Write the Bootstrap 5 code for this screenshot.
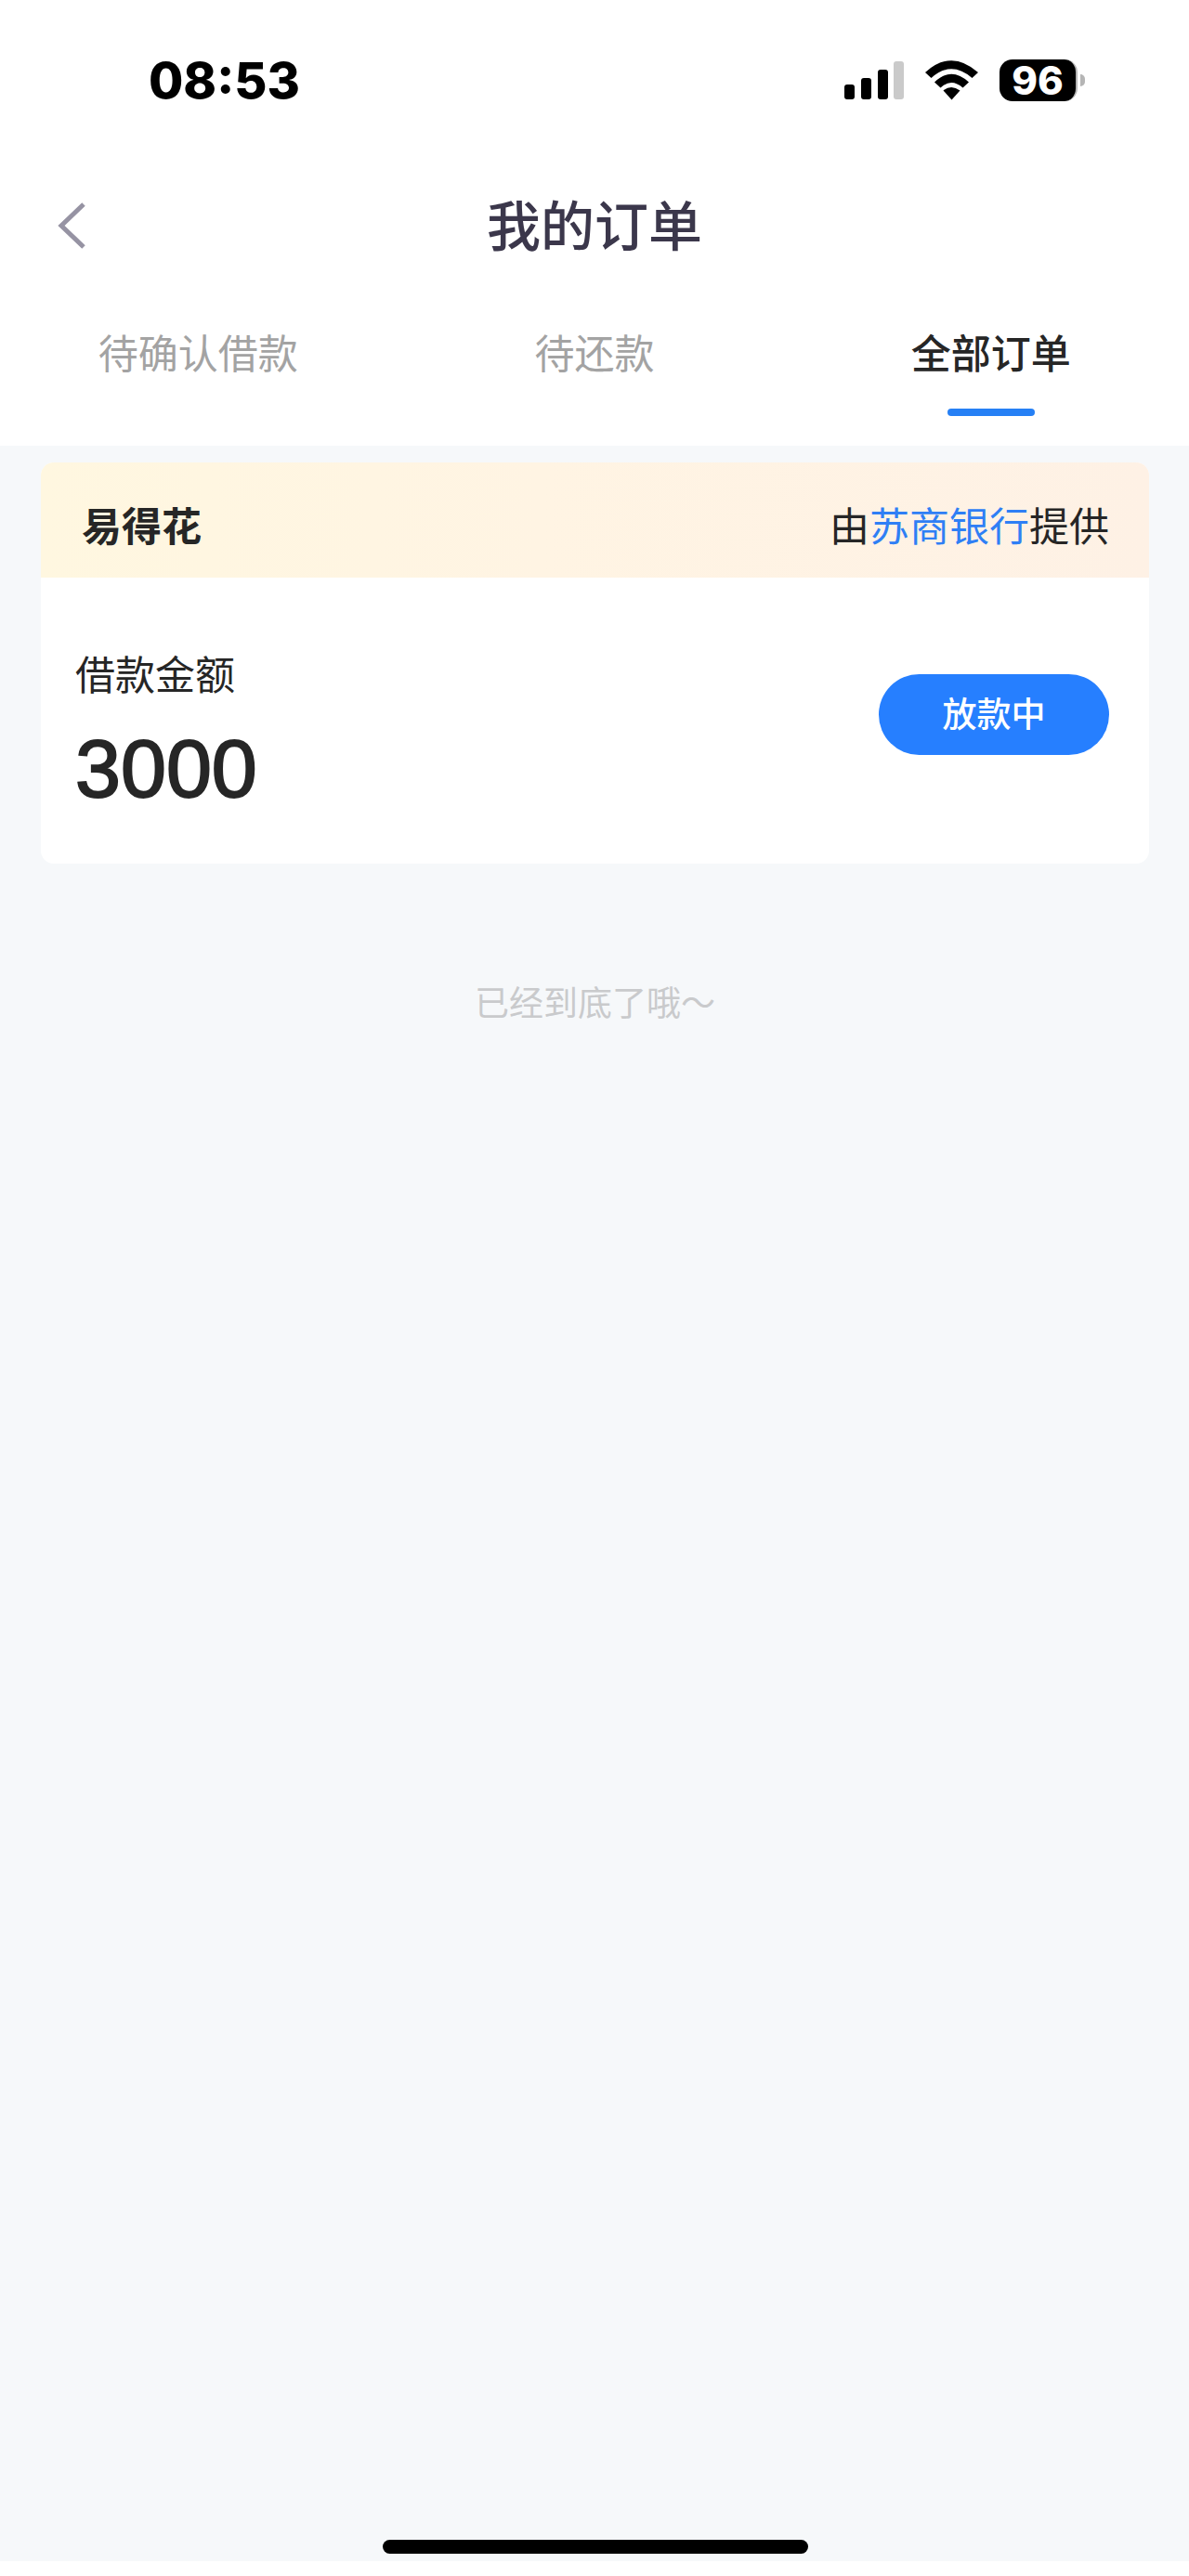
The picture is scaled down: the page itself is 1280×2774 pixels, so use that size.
<!DOCTYPE html>
<html lang="zh-CN">
<head>
<meta charset="utf-8">
<meta name="viewport" content="width=device-width, initial-scale=1">
<title>我的订单</title>
<link href="https://cdn.jsdelivr.net/npm/bootstrap@5.3.0/dist/css/bootstrap.min.css" rel="stylesheet">
<style>
  body { font-family: "Noto Sans CJK SC", sans-serif; color: #262626; background: #fff; line-height: 1.5; }
  .status-bar { height: 172px; padding: 0 112px 0 160px; font-family: Inter, "Noto Sans CJK SC", sans-serif; color: #000; }
  .clock { font-size: 54px; font-weight: 800; line-height: 60px; padding-top: 2px; }
  .battery { width: 84px; height: 45px; border-radius: 14px; border-right: 2px solid #b5b5b5; background: #000; color: #fff; font-size: 42px; font-weight: 800; line-height: 45px; margin-left: 22px; }
  .battery-tip { width: 5px; height: 13px; margin-left: 3px; border-radius: 0 5px 5px 0; background: #b5b5b5; }
  .title-bar { height: 140px; padding: 0 44px; }
  .side-slot { width: 64px; height: 64px; }
  .page-title { font-size: 58px; line-height: 84px; font-weight: 500; color: #3b374b; padding-bottom: 5px; }
  .order-tabs { height: 168px; }
  .order-tabs .nav-link { padding: 34px 0 0; font-size: 43px; line-height: 64px; color: #a3a3a3; }
  .order-tabs .nav-link.active { color: #262626; font-weight: 500; }
  .order-tabs .nav-link.active::after { content: ""; display: block; width: 94px; height: 8px; margin: 30px auto 0; border-radius: 4px; background: #2680f5; }
  .order-page { background: #f6f8fa; padding: 18px 43px 0 44px; }
  .order-card { border: 0; border-radius: 14px; overflow: hidden; font-size: 43px; line-height: 64px; }
  .order-head { height: 124px; padding: 8px 43px 0 44px; background: linear-gradient(90deg, #fff7e0 0, #fff4e3 45%, #fef1e5 100%); }
  .bank-link, .bank-link:hover { color: #2f7ff5; }
  .order-body { padding: 70px 43px 52px 37px; }
  .loan-sum { font-family: "Liberation Sans", sans-serif; font-size: 88px; line-height: 100px; margin-top: 22px; -webkit-text-stroke: 2px currentColor; }
  .state-btn, .state-btn:hover { width: 248px; height: 87px; margin-bottom: 32px; padding: 0 0 2px; border: 0; font-size: 37px; font-weight: 500; background: #267fff; color: #fff; }
  .end-note { margin-top: 120px; font-size: 37px; line-height: 56px; color: #c9cacc; }
  .home-bar { width: 458px; height: 15px; border-radius: 8px; background: #000; margin-bottom: 8px; }
  .page-foot { height: 16px; }
</style>
</head>
<body>
<div class="min-vh-100 d-flex flex-column">
  <header class="bg-white">
    <div class="status-bar d-flex align-items-center justify-content-between">
      <div class="clock">08:53</div>
      <div class="d-flex align-items-center">
        <svg width="146" height="46" viewBox="908 62 146 46" role="img" aria-label="信号、无线网络">
          <rect x="909" y="90" width="11" height="16" rx="3"/>
          <rect x="927" y="83" width="11" height="23" rx="3"/>
          <rect x="945" y="74" width="11" height="32" rx="3"/>
          <rect x="962" y="65" width="11" height="41" rx="3" fill="#cacaca"/>
          <path d="M996 77Q1024 51.500 1053 77L1046.500 83Q1024 63.500 1002.500 83Z"/>
          <path d="M1006 87.500Q1024 70 1043 87.500L1036.500 93.500Q1024 82.500 1012.500 93.500Z"/>
          <path d="M1015.500 96.500Q1024 89.500 1033.500 96.500L1024.500 106.500Z"/>
        </svg>
        <div class="battery text-center">96</div>
        <div class="battery-tip"></div>
      </div>
    </div>
    <div class="title-bar d-flex align-items-center justify-content-between">
      <a href="#" class="side-slot d-flex align-items-center" aria-label="返回">
        <svg width="64" height="64" viewBox="0 0 64 64" fill="none" stroke="#9693a3" stroke-width="5"><path d="M46 10L22 33L46 56"/></svg>
      </a>
      <h1 class="page-title mb-0">我的订单</h1>
      <span class="side-slot"></span>
    </div>
    <nav class="order-tabs row g-0 text-center" aria-label="订单分类">
      <a class="nav-link col" href="#">待确认借款</a>
      <a class="nav-link col" href="#">待还款</a>
      <a class="nav-link col active" href="#" aria-current="page">全部订单</a>
    </nav>
  </header>
  <main class="order-page flex-grow-1 d-flex flex-column">
    <article class="card order-card">
      <div class="order-head d-flex align-items-center justify-content-between">
        <strong class="fw-bold">易得花</strong>
        <span>由<a href="#" class="bank-link text-decoration-none">苏商银行</a>提供</span>
      </div>
      <div class="order-body d-flex align-items-center justify-content-between">
        <div>
          <div>借款金额</div>
          <div class="loan-sum">3000</div>
        </div>
        <button type="button" class="btn rounded-pill state-btn">放款中</button>
      </div>
    </article>
    <p class="end-note text-center mb-0">已经到底了哦～</p>
    <div class="home-bar mt-auto align-self-center"></div>
  </main>
  <footer class="page-foot bg-white"></footer>
</div>
<script src="https://cdn.jsdelivr.net/npm/bootstrap@5.3.0/dist/js/bootstrap.bundle.min.js"></script>
</body>
</html>
